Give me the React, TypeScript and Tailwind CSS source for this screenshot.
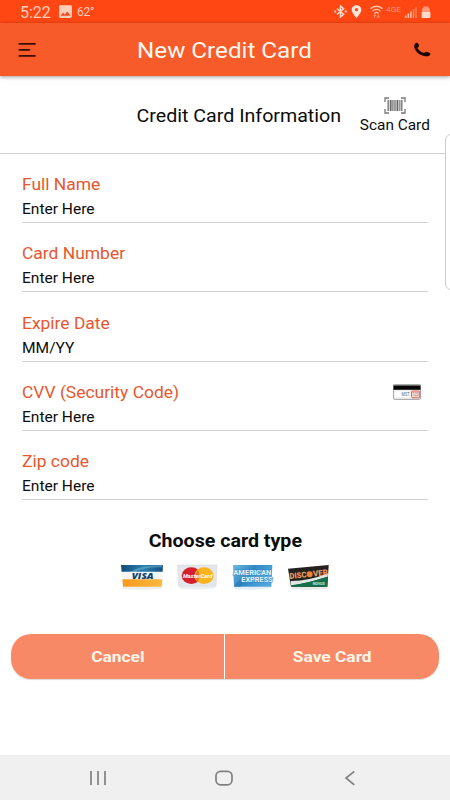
import React from "react";
import { MdImage, MdLocationOn } from "react-icons/md";

const fields = [
    { label: "Full Name", value: "Enter Here" },
    { label: "Card Number", value: "Enter Here" },
    { label: "Expire Date", value: "MM/YY" },
    { label: "CVV (Security Code)", value: "Enter Here", cvv: true },
    { label: "Zip code", value: "Enter Here" },
];

const StatusBar = () => (
    <div className="flex h-[23px] shrink-0 items-center bg-[#fe4713] pl-5 pr-[19px] text-[#ffcfba]">
        <span className="w-[30px] pt-[2px] text-[16px] leading-none">5:22</span>
        <MdImage className="ml-[7px] h-[17px] w-[17px]" />
        <span className="ml-[3px] text-[12px] leading-none tracking-tight">62°</span>
        <div className="ml-auto flex items-center">
            <svg width="13" height="13" viewBox="0 0 13 13" fill="none" stroke="#ffdccd" strokeWidth="1.5">
                <path d="M3 3.5L9.6 9.2L6.5 12V1L9.6 3.8L3 9.5" />
                <path d="M0.3 6.5H2.2M10.8 6.5H12.7" strokeWidth="1.8" />
            </svg>
            <MdLocationOn className="ml-[2px] h-[15px] w-[15px] scale-x-110 text-[#ffe6dc]" />
            {/* wifi, network, signal, battery */}
            <svg width="61" height="14" viewBox="0 0 61 14" className="ml-[6px]" fill="none">
                <g stroke="#ffc4ac" strokeWidth="1.4" strokeLinecap="round">
                    <path d="M1 3.4Q6.5 -0.8 12 3.4" />
                    <path d="M3 5.8Q6.5 3 10 5.8" />
                    <path d="M4.9 8Q6.5 6.8 8.1 8" />
                </g>
                <path d="M4.7 9.6V13M3.4 11L4.7 9.4L6 11M8.3 9.4V12.8M7 11.3L8.3 12.9L9.6 11.3" stroke="#ff9d78" strokeWidth="0.9" />
                <text x="16" y="6.6" fontSize="6.5" textLength="15" lengthAdjust="spacingAndGlyphs" fill="#ff9874">4GE</text>
                <path d="M35 10.5H36.5V13H35ZM37.6 8.5H39.1V13H37.6ZM40.2 6.5H41.7V13H40.2Z" fill="#ffc4ac" />
                <path d="M42.8 4.3H44.3V13H42.8ZM45.4 2.3H46.6V13H45.4Z" fill="#ff9068" />
                <path d="M52 4.5Q52 3 53.4 3V1.5H58.4V3Q60 3 60 4.5V8H52Z" fill="#ff9874" />
                <path d="M51.6 7H60.4V12Q60.4 13 59.4 13H52.6Q51.6 13 51.6 12Z" fill="#ffd9c9" />
            </svg>
        </div>
    </div>
);

const Header = () => (
    <div className="flex h-[53px] shrink-0 items-center justify-between bg-[#f85b2a] pl-[18px] pr-[19px] shadow-[0_1px_4px_rgba(0,0,0,0.4)]">
        <svg width="18" height="16" viewBox="0 0 18 16" stroke="#3b0d04" strokeWidth="1.7" strokeLinecap="round">
            <path d="M1.3 1.8H17M1.3 7.8H11.5M1.3 13.8H17" />
        </svg>
        <h1 className="scale-x-[1.1] pt-[3px] text-[22px] leading-none text-[#fff8f0]">New Credit Card</h1>
        <svg width="18" height="16" viewBox="0 0 54 48" fill="#1c0602">
            <path d="M6 5Q10 1 14 3Q19 8 18 13Q17 16 13 17Q18 28 34 33Q36 29 39 29Q46 29 52 34Q53 38 49 41Q42 45 30 41Q9 34 4 17Q2 9 6 5Z" />
        </svg>
    </div>
);

const ScanIcon = () => (
    <svg width="22" height="17" viewBox="0 0 22 17" fill="none">
        <path d="M1 5V1H5M17 1H21V5M21 12V16H17M5 16H1V12" stroke="#777" strokeWidth="1.3" />
        <path d="M4.2 3V14M11 3V14M17.8 3V14" stroke="#777" strokeWidth="1.4" />
        <path d="M6.7 3V14M13.4 3V14" stroke="#666" strokeWidth="1.8" />
        <path d="M8.9 3V14M15.7 3V14" stroke="#999" strokeWidth="1.8" />
    </svg>
);

const CvvIcon = () => (
    <svg width="28" height="16" viewBox="0 0 28 16" className="mb-[2px]">
        <rect x="0.4" y="0.4" width="27.2" height="15" rx="1.2" fill="#f0f0f0" stroke="#999" strokeWidth="0.9" />
        <rect x="0.5" y="1.4" width="27" height="4.4" fill="#050505" />
        <rect x="1.5" y="7.5" width="15" height="5.5" fill="#fff" />
        <text x="8.5" y="11.6" fontSize="5" fill="#567" textLength="8" lengthAdjust="spacingAndGlyphs">MST</text>
        <rect x="18.6" y="7" width="8.2" height="6.8" rx="1" fill="#fbe0d6" stroke="#d4604e" strokeWidth="1" />
        <text x="19.7" y="12.2" fontSize="5" fill="#c0503c" textLength="6" lengthAdjust="spacingAndGlyphs">123</text>
    </svg>
);

const VisaCard = () => (
    <svg width="42" height="28" viewBox="0 0 126 84" className="ml-px">
        <defs>
            <linearGradient id="visaTop">
                <stop offset="0" stopColor="#124c7c" />
                <stop offset="0.55" stopColor="#2b7fae" />
                <stop offset="1" stopColor="#174f7f" />
            </linearGradient>
            <linearGradient id="visaBottom">
                <stop offset="0" stopColor="#f79a1c" />
                <stop offset="1" stopColor="#fdb83e" />
            </linearGradient>
        </defs>
        <path d="M5 68H122V74Q60 80 5 75Z" fill="#eceff2" />
        <path d="M0 3H126L125 24H2Z" fill="url(#visaTop)" />
        <path d="M26 24Q60 3 124 3L123 10Q70 8 44 24Z" fill="#69aecb" opacity="0.6" />
        <path d="M2 23H125L124 46H4Z" fill="#f3f7fa" />
        <path d="M4 46H124L122 68H6Z" fill="url(#visaBottom)" />
        <text x="32" y="44" fontSize="26" fontWeight="800" fontStyle="italic" fill="#123e6d" textLength="66" lengthAdjust="spacingAndGlyphs" className="font-['Open_Sans',sans-serif]">VISA</text>
    </svg>
);

const MasterCard = () => (
    <svg width="42" height="28" viewBox="0 0 126 84">
        <path d="M8 68H114V73Q60 80 8 74Z" fill="#eceff2" />
        <path d="M2 3H120L117 67H5Z" fill="#e4e6ea" stroke="#cfd1d6" strokeWidth="1.5" />
        <ellipse cx="43" cy="35" rx="29" ry="25" fill="#d61f2c" />
        <ellipse cx="81" cy="35" rx="29" ry="25" fill="#f8b51f" />
        <path d="M62 17Q73 35 62 53Q51 35 62 17Z" fill="#ec7025" />
        <text x="18" y="41" fontSize="17" fontWeight="700" fontStyle="italic" fill="#fff" textLength="88" lengthAdjust="spacingAndGlyphs">MasterCard</text>
    </svg>
);

const AmexCard = () => (
    <svg width="42" height="28" viewBox="0 0 126 84" className="-ml-px mr-px">
        <defs>
            <linearGradient id="amex" x2="1" y2="0.4">
                <stop offset="0" stopColor="#6fb8e2" />
                <stop offset="0.5" stopColor="#2f88c6" />
                <stop offset="1" stopColor="#4ea5da" />
            </linearGradient>
        </defs>
        <path d="M7 68H117V73Q60 80 8 75Z" fill="#e3eef5" />
        <path d="M3 3H121L118 68H6Z" fill="url(#amex)" />
        <path d="M6 68Q20 40 62 38L60 48Q34 50 24 68Z" fill="#2673b2" opacity="0.6" />
        <rect x="5" y="18" width="114" height="16" fill="#b7def3" opacity="0.55" />
        <rect x="29" y="37" width="91" height="16" fill="#b7def3" opacity="0.55" />
        <g fill="#eaf6fd" stroke="#2d86c3" strokeWidth="3" paintOrder="stroke" fontWeight="700" fontSize="20">
            <text x="4" y="33" textLength="114" lengthAdjust="spacingAndGlyphs">AMERICAN</text>
            <text x="28" y="53" textLength="94" lengthAdjust="spacingAndGlyphs">EXPRESS</text>
        </g>
    </svg>
);

const DiscoverCard = () => (
    <svg width="42" height="28" viewBox="0 0 126 84" className="-ml-px">
        <path d="M12 68H118V74Q60 80 12 75Z" fill="#e8ebe9" />
        <path d="M0 14L122 3L118 68H9Z" fill="#24211f" />
        <path d="M8 51Q60 52 120 28L119 38Q68 55 9 66Z" fill="#dfe8e2" />
        <path d="M9 64Q60 57 119 38L118 68H9Z" fill="#13704a" />
        <g fill="#f5a26c" fontWeight="800" fontSize="24" transform="rotate(-6 62 30)">
            <text x="4" y="39" textLength="51" lengthAdjust="spacingAndGlyphs">DISC</text>
            <circle cx="65" cy="31" r="9" fill="#f08231" />
            <text x="75" y="39" textLength="45" lengthAdjust="spacingAndGlyphs">VER</text>
        </g>
        <text x="74" y="62" fontSize="9" fontWeight="700" fill="#d5eadf" textLength="36" lengthAdjust="spacingAndGlyphs">NOVUS</text>
    </svg>
);

const App = () => {
    return (
        <div className="relative flex h-[800px] w-[450px] flex-col overflow-hidden bg-white font-['Roboto',sans-serif] text-[#0c0c0c]">
            <StatusBar />
            <Header />

            <div className="flex h-[78px] shrink-0 items-center justify-end gap-[19px] border-b border-[#cfcfcf] pr-[20px] pt-[2px]">
                <div className="flex w-[206px] justify-center pl-px">
                    <h2 className="scale-x-[1.09] whitespace-nowrap text-[18px]">Credit Card Information</h2>
                </div>
                <div className="flex w-[70px] flex-col items-center">
                    <ScanIcon />
                    <span className="mt-[1px] scale-x-[1.1] whitespace-nowrap text-[14px] leading-5">Scan Card</span>
                </div>
            </div>

            <div className="flex flex-col px-[22px]">
                {fields.map((f) => (
                    <div key={f.label} className="flex h-[69.2px] flex-col justify-end border-b border-[#d2d2d2]">
                        <div className="flex h-6 items-center justify-between pr-[7px]">
                            <span className="origin-left scale-x-[1.09] text-[16px] text-[#e8562e]">{f.label}</span>
                            {f.cvv && <CvvIcon />}
                        </div>
                        <span className="origin-left scale-x-[1.11] text-[14px] leading-[25px]">{f.value}</span>
                    </div>
                ))}
            </div>

            <div className="mt-[29px] flex flex-col items-center">
                <h3 className="scale-x-[1.09] text-[18px] font-bold leading-6">Choose card type</h3>
                <div className="mt-[11px] flex gap-[14px]">
                    <VisaCard />
                    <MasterCard />
                    <AmexCard />
                    <DiscoverCard />
                </div>
            </div>

            <div className="mx-[11px] mt-[42px] flex h-[45px] shrink-0 gap-px overflow-hidden rounded-[20px] text-[15.5px] font-bold text-[#fff6ea] shadow-[0_1px_1px_rgba(0,0,0,0.15)]">
                <button className="w-[213px] bg-[#f88967] pt-[2px]">
                    <span className="inline-block scale-x-[1.12]">Cancel</span>
                </button>
                <button className="flex-1 bg-[#f88967] pt-[2px]">
                    <span className="inline-block scale-x-[1.12]">Save Card</span>
                </button>
            </div>

            <div className="mt-auto flex h-[45px] shrink-0 items-center justify-center gap-[109px] bg-[#f0f0f0] pr-[2px]">
                <svg width="16" height="16" viewBox="0 0 16 16" stroke="#808080" strokeWidth="1.7">
                    <path d="M1 1V15M8 1V15M15 1V15" />
                </svg>
                <svg width="18" height="16" viewBox="0 0 18 16" fill="none" stroke="#808080" strokeWidth="1.7">
                    <rect x="1" y="1.4" width="16" height="13.4" rx="4.5" />
                </svg>
                <svg width="16" height="16" viewBox="0 0 16 16" fill="none" stroke="#808080" strokeWidth="1.7">
                    <path d="M12.3 1.4L4 8L12.3 14.8" />
                </svg>
            </div>

            {/* edge panel handle */}
            <div className="absolute -right-[6px] top-[134px] h-[156px] w-[11px] rounded-l-[6px] border border-[#cdcdcd] bg-white" />
        </div>
    );
};

export default App;
